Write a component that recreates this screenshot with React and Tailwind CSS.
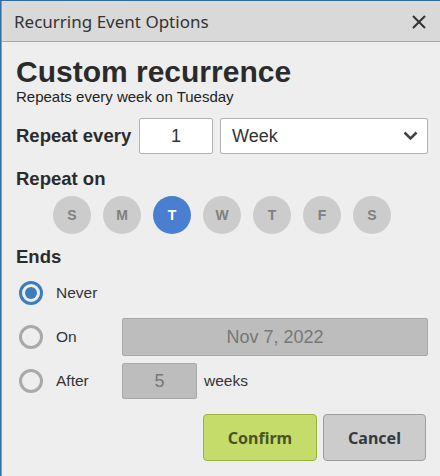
import React from "react";

const days = ["S", "M", "T", "W", "T", "F", "S"];

function Radio({ checked }) {
  return checked ? (
    <div className="w-[24px] h-[24px] rounded-full border-[3px] border-[#3b7dbd] flex items-center justify-center">
      <div className="w-[12px] h-[12px] rounded-full bg-[#3b7dbd]" />
    </div>
  ) : (
    <div className="w-[24px] h-[24px] rounded-full border-[3px] border-[#a9a9a9]" />
  );
}

export default function App() {
  return (
    <div className="w-[440px] h-[476px] bg-[#2f6ea3] pt-px pl-px overflow-hidden">
      <div className="h-full bg-[#eeeeee] border-l border-[#9a9a9a] flex flex-col">
        <div className="h-[41px] bg-[#d9d9d9] border-b border-[#a6a6a6] flex items-center justify-between pl-[12px] pr-[14px] shrink-0">
          <span className="text-[17px] text-[#333333] font-['Noto_Sans',sans-serif] leading-none">
            Recurring Event Options
          </span>
          <svg width="14" height="14" viewBox="0 0 14 14" className="mt-[2px]">
            <path d="M1 1L13 13M13 1L1 13" stroke="#333" strokeWidth="2" />
          </svg>
        </div>

        <div className="flex flex-col pl-[14px] pr-[12px] font-['Liberation_Sans',Arial,sans-serif] text-[#333333]">
          <div className="mt-[13px] text-[30px] leading-[34px] font-bold text-[#2b2b2b]">
            Custom recurrence
          </div>
          <div className="text-[15px] leading-[16px] text-[#222222]">
            Repeats every week on Tuesday
          </div>

          <div className="mt-[13px] flex items-center h-[36px]">
            <div className="text-[18.5px] leading-[24px] font-bold text-[#2b2b2b] w-[123px]">
              Repeat every
            </div>
            <div className="w-[74px] h-[36px] bg-white border border-[#b3b3b3] rounded-[2px] flex items-center justify-center text-[18px] text-[#333]">
              1
            </div>
            <div className="ml-[7px] flex-1 h-[36px] bg-white border border-[#b3b3b3] rounded-[2px] flex items-center justify-between pl-[11px] pr-[9px] text-[18px] text-[#333]">
              <span>Week</span>
              <svg width="15" height="10" viewBox="0 0 15 10">
                <path d="M1.5 1.5L7.5 7.5L13.5 1.5" stroke="#444" strokeWidth="2.6" fill="none" />
              </svg>
            </div>
          </div>

          <div className="mt-[13px] text-[18.5px] leading-[24px] font-bold text-[#2b2b2b]">
            Repeat on
          </div>
          <div className="mt-[5px] ml-[37px] flex gap-[12px]">
            {days.map((d, i) => (
              <div
                key={i}
                className={
                  i === 2
                    ? "w-[38px] h-[38px] rounded-full bg-[#4a7fcf] text-white flex items-center justify-center text-[14px] font-bold"
                    : "w-[38px] h-[38px] rounded-full bg-[#cccccc] text-[#808080] flex items-center justify-center text-[14px] font-bold"
                }
              >
                {d}
              </div>
            ))}
          </div>

          <div className="mt-[11px] text-[18.5px] leading-[24px] font-bold text-[#2b2b2b]">
            Ends
          </div>

          <div className="mt-[2px] flex flex-col text-[15.5px] text-[#333]">
            <div className="h-[44px] flex items-center">
              <div className="ml-[3px]"><Radio checked /></div>
              <span className="ml-[13px]">Never</span>
            </div>
            <div className="h-[44px] flex items-center">
              <div className="ml-[3px]"><Radio /></div>
              <span className="ml-[13px] w-[66px]">On</span>
              <div className="flex-1 h-[38px] bg-[#bdbdbd] border border-[#a9a9a9] rounded-[2px] flex items-center justify-center text-[18px] text-[#777777]">
                Nov 7, 2022
              </div>
            </div>
            <div className="h-[44px] flex items-center">
              <div className="ml-[3px]"><Radio /></div>
              <span className="ml-[13px] w-[66px]">After</span>
              <div className="w-[75px] h-[36px] bg-[#bdbdbd] border border-[#a9a9a9] rounded-[2px] flex items-center justify-center text-[18px] text-[#777777]">
                5
              </div>
              <span className="ml-[7px]">weeks</span>
            </div>
          </div>

          <div className="mt-[11px] flex justify-end gap-[6px] pr-[2px] font-['Noto_Sans',sans-serif]">
            <button className="w-[114px] h-[47px] rounded-[4px] bg-[#c5dc6b] border border-[#9db53f] text-[#4a5324] text-[16px] font-bold">
              Confirm
            </button>
            <button className="w-[103px] h-[47px] rounded-[4px] bg-[#cccccc] border border-[#9e9e9e] text-[#333a44] text-[16px] font-bold">
              Cancel
            </button>
          </div>
        </div>
      </div>
    </div>
  );
}
